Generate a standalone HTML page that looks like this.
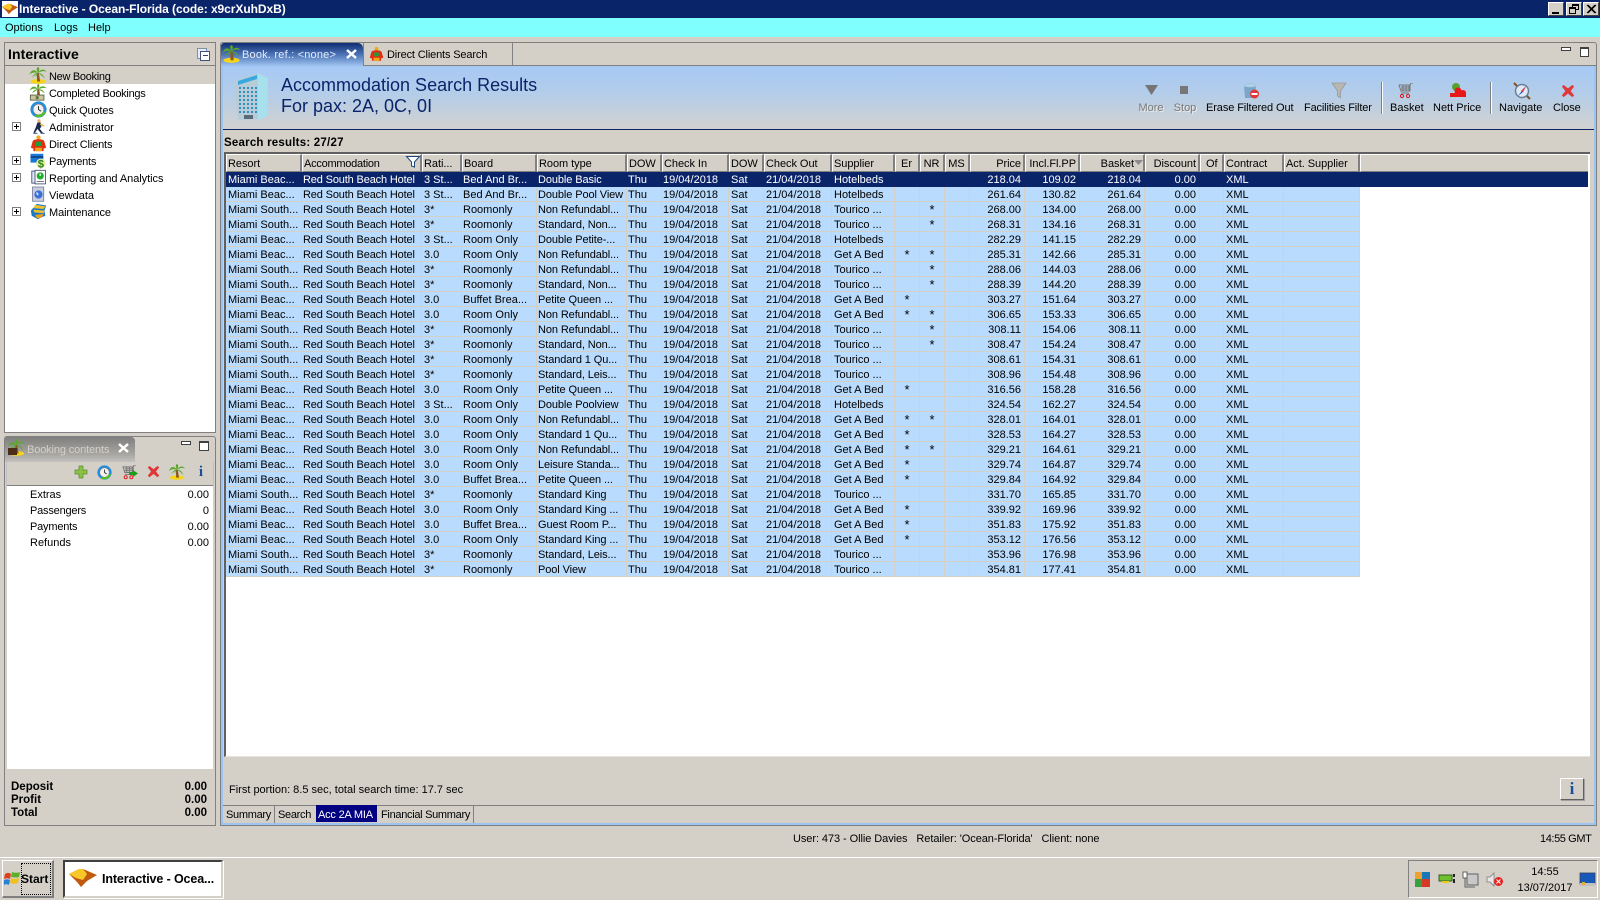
<!DOCTYPE html>
<html><head><meta charset="utf-8"><title>Interactive</title>
<style>
html,body{margin:0;padding:0;width:1600px;height:900px;overflow:hidden;background:#d4d0c8}
body{position:relative;font:11px/14px "Liberation Sans",sans-serif;color:#000}
.a{position:absolute;white-space:nowrap;margin-top:1px}
.b{position:absolute;box-sizing:border-box}
svg.i{position:absolute;overflow:visible}
.r{text-align:right}
table{position:absolute;left:226px;top:154px;width:1362px;border-collapse:separate;border-spacing:0;table-layout:fixed;font:11px/14px "Liberation Sans",sans-serif;background:#fff}
th{height:18px;padding:1px 2px 0 1px;box-sizing:border-box;font-weight:normal;text-align:left;background:#d4d0c8;border-top:1px solid #fff;border-left:1px solid #fff;border-right:2px solid #808080;border-bottom:1px solid #808080;overflow:hidden;white-space:nowrap;letter-spacing:-.05px}
th:nth-child(2){letter-spacing:-.25px}
th:nth-child(18){padding-left:5px}
td{height:15px;padding:1px 2px 0;box-sizing:border-box;background:#b9dbfd;border-right:1px solid #d4d0c8;box-shadow:inset 0 -1px #d4d0c8;overflow:hidden;white-space:nowrap}
td:nth-child(2){padding-left:1px;letter-spacing:-.15px}
td:nth-child(n+4):nth-child(-n+7){padding-left:1px}
td:nth-child(5){letter-spacing:-.1px}
td:nth-child(n+14):nth-child(-n+17){text-align:right;padding-right:3px}
th:nth-child(n+14):nth-child(-n+17){text-align:right;padding-right:2px}
th:nth-child(n+16):nth-child(-n+16){padding-right:9px}
td:nth-child(n+11):nth-child(-n+13),th:nth-child(n+11):nth-child(-n+13){text-align:center}
td:nth-child(11),td:nth-child(12){font-size:13px}
td:last-child{background:#fff;border:0;box-shadow:none}
th:last-child{border-right:0}
tr.s td{background:#0a246a;color:#fff;border-right-color:#0a246a;box-shadow:none}
</style></head><body>
<svg width="0" height="0" style="position:absolute"><defs>
<symbol id="palm" viewBox="0 0 20 20"><ellipse cx="10" cy="17" rx="9" ry="2.800" fill="#f6d418"/><path d="M8.500 7h2.500l1.500 10H9z" fill="#8a5a20"/><path d="M10 7C6 2 2 3 0 9c3-3 6-3 10-2zM10 7C8 3 8 1 10 0c2 1 2 4 0 7zM10 7c3-5 8-5 10-1-3-2-6-1-10 1zM10 7c-4 0-6 3-7 6 2-3 4-4 7-6zM10 7c4 0 7 3 8 7-2-3-5-5-8-7zM10 7c-2 1-3 3-3 5 1-2 2-3 3-5z" fill="#5aa828"/></symbol>
<symbol id="money" viewBox="0 0 20 20"><path d="M9 6h2.500l1 8H9z" fill="#8a5a20"/><path d="M10 6C6 1 2 3 0 8c3-3 6-3 10-2zM10 6C8 2 9 0 11 0c1 2 1 3-1 6zM10 6c3-4 8-4 10-1-3-1-6 0-10 1zM10 6c-3 0-6 2-7 5 2-2 5-3 7-5zM10 6c4 0 7 2 8 5-2-2-5-3-8-5z" fill="#5aa828"/><rect x="1" y="13" width="16" height="6" fill="#c8c8a0" stroke="#5a5a40"/><circle cx="9" cy="16" r="2" fill="#6a7a40"/></symbol>
<symbol id="clock" viewBox="0 0 20 20"><circle cx="10" cy="10" r="9.500" fill="#1c90e8"/><circle cx="10" cy="10" r="6.500" fill="#f2f2f2" stroke="#777"/><path d="M10 6v4l3 2" stroke="#333" stroke-width="1.200" fill="none"/><path d="M5 18c5 3 12 0 14-6l-4 1c-1 3-5 4-8 3z" fill="#5ac020"/></symbol>
<symbol id="run" viewBox="0 0 20 20"><circle cx="10" cy="3" r="2" fill="#e8b070"/><path d="M8 5h4l1 5-2 3 4 5h-3l-4-5-3 5H3l3-7z" fill="#1a2a50"/><path d="M12 6l5 3-1 1-5-2z" fill="#e8b040"/><path d="M3 18h5v1H3zM12 18h5v1h-5z" fill="#204080"/></symbol>
<symbol id="client" viewBox="0 0 20 20"><circle cx="10" cy="3" r="2.500" fill="#f0a818"/><path d="M3 8c0-2 3-3 7-3s7 1 7 3l2 7-3 1v3H4v-3l-3-1z" fill="#e03010"/><rect x="7" y="8" width="6" height="5" fill="#18a040"/><rect x="6" y="15" width="8" height="4" fill="#f0a818"/></symbol>
<symbol id="pay" viewBox="0 0 20 20"><rect x="0" y="1" width="16" height="11" fill="#1878d8"/><rect x="0" y="4" width="16" height="2" fill="#103c78"/><circle cx="13" cy="13" r="6" fill="#e8f0a0"/><text x="13" y="18" font-size="14" font-weight="bold" text-anchor="middle" fill="#288020" font-family="Liberation Sans">$</text></symbol>
<symbol id="rep" viewBox="0 0 20 20"><rect x="1" y="2" width="11" height="15" fill="#dfe6f2" stroke="#30406a"/><rect x="5" y="1" width="13" height="17" fill="#fff" stroke="#30406a"/><circle cx="11.500" cy="8" r="4.500" fill="#20b030"/><path d="M11.500 5v3" stroke="#fff" stroke-width="1.500"/><path d="M7 15h9" stroke="#556"/></symbol>
<symbol id="view" viewBox="0 0 20 20"><rect x="2" y="0" width="15" height="19" fill="#c8cede" stroke="#6a7296"/><circle cx="10" cy="10" r="5.500" fill="#3a70d8"/><path d="M7 7c2 0 3 1 3 3s-3 2-3-3z" fill="#d0e0ff"/></symbol>
<symbol id="maint" viewBox="0 0 20 20"><path d="M8 1l11 2-2 6 1 6-9 4-7-4-1-6z" fill="#1878c8"/><path d="M6 2l12 2-2 3-12-1zM4 8l13 1-1 3-11-1z" fill="#f0c030"/><path d="M6 14l10-1-2 4-6 1z" fill="#f0a018"/></symbol>
<symbol id="x" viewBox="0 0 16 16"><path d="M3 1l5 4 5-4 2 2-4 5 4 5-2 2-5-4-5 4-2-2 4-5-4-5z" fill="#e03838"/></symbol>
<symbol id="tree" viewBox="0 0 9 9"><rect x=".5" y=".5" width="8" height="8" fill="#fff" stroke="#808080"/><path d="M2 4.500h5M4.500 2v5" stroke="#000"/></symbol>
<symbol id="gem" viewBox="0 0 28 18"><path d="M0 5l10-5h4l14 6-10 6-6 6-4-5z" fill="#c05a10"/><path d="M0 5l10-5 4 0 4 5-4 6-7-2z" fill="#f8c828"/></symbol>
<symbol id="cart" viewBox="0 0 16 16"><path d="M1 2h11v6H3zM3 4h9M3 6h9M5 2v6M8 2v6M11 2v6M12 2l1-2h2" stroke="#777" fill="none"/><circle cx="4" cy="13" r="1.600" fill="none" stroke="#e01818"/><circle cx="10" cy="13" r="1.600" fill="none" stroke="#e01818"/><path d="M3 10h8" stroke="#777"/></symbol>
</defs></svg>

<!-- title bar -->
<div class="b" style="left:0;top:0;width:1600px;height:18px;background:#0a246a"></div>
<div class="b" style="left:2px;top:1px;width:16px;height:16px;background:#fff"></div>
<svg class="i" style="left:2px;top:3px" width="16" height="12"><use href="#gem"/></svg>
<div class="a" style="left:19px;top:1px;color:#fff;font:bold 12px/14px 'Liberation Sans',sans-serif;letter-spacing:-.06px">Interactive - Ocean-Florida (code: x9crXuhDxB)</div>
<div class="b" style="left:1548px;top:2px;width:16px;height:14px;background:#d4d0c8;border:1px solid;border-color:#fff #404040 #404040 #fff"><div class="b" style="left:3px;top:9px;width:7px;height:2px;background:#000"></div></div>
<div class="b" style="left:1566px;top:2px;width:16px;height:14px;background:#d4d0c8;border:1px solid;border-color:#fff #404040 #404040 #fff"><div class="b" style="left:5px;top:1px;width:7px;height:6px;border:1px solid #000;border-top-width:2px"></div><div class="b" style="left:2px;top:4px;width:7px;height:7px;border:1px solid #000;border-top-width:2px;background:#d4d0c8"></div></div>
<div class="b" style="left:1583px;top:2px;width:16px;height:14px;background:#d4d0c8;border:1px solid;border-color:#fff #404040 #404040 #fff"><svg class="i" style="left:3px;top:2px" width="9" height="8"><path d="M0 0l8 8M1 0l8 8M8 0l-8 8M9 0l-8 8" stroke="#000"/></svg></div>

<!-- menu -->
<div class="b" style="left:0;top:18px;width:1600px;height:19px;background:#80ffff"></div>
<div class="a" style="left:5px;top:20px">Options</div>
<div class="a" style="left:54px;top:20px">Logs</div>
<div class="a" style="left:88px;top:20px">Help</div>

<!-- left tree panel -->
<div class="b" style="left:4px;top:42px;width:212px;height:391px;background:#fff;border:1px solid #808080"></div>
<div class="b" style="left:5px;top:43px;width:210px;height:23px;background:#d4d0c8;border-bottom:1px solid #808080"></div>
<div class="a" style="left:8px;top:45px;font:bold 14px/16px 'Liberation Sans',sans-serif;letter-spacing:.08px">Interactive</div>
<div class="b" style="left:197px;top:48px;width:10px;height:11px;border:1px solid #8090a8;background:#e8eef8"></div>
<div class="b" style="left:200px;top:51px;width:10px;height:10px;border:1px solid #405080;background:#fff"><div class="b" style="left:2px;top:3px;width:5px;height:1px;background:#304070"></div></div>
<div class="b" style="left:5px;top:66px;width:210px;height:18px;background:#d4d0c8"></div>
<svg class="i" style="left:29px;top:67px" width="18" height="17"><use href="#palm"/></svg>
<svg class="i" style="left:29px;top:84px" width="18" height="17"><use href="#money"/></svg>
<svg class="i" style="left:30px;top:101px" width="17" height="17"><use href="#clock"/></svg>
<svg class="i" style="left:31px;top:118px" width="16" height="17"><use href="#run"/></svg>
<svg class="i" style="left:30px;top:135px" width="17" height="17"><use href="#client"/></svg>
<svg class="i" style="left:30px;top:153px" width="17" height="16"><use href="#pay"/></svg>
<svg class="i" style="left:31px;top:169px" width="16" height="17"><use href="#rep"/></svg>
<svg class="i" style="left:31px;top:186px" width="15" height="17"><use href="#view"/></svg>
<svg class="i" style="left:30px;top:203px" width="17" height="17"><use href="#maint"/></svg>
<svg class="i" style="left:12px;top:122px" width="9" height="9"><use href="#tree"/></svg>
<svg class="i" style="left:12px;top:156px" width="9" height="9"><use href="#tree"/></svg>
<svg class="i" style="left:12px;top:173px" width="9" height="9"><use href="#tree"/></svg>
<svg class="i" style="left:12px;top:207px" width="9" height="9"><use href="#tree"/></svg>
<div class="a" style="left:49px;top:69px;letter-spacing:-.3px">New Booking</div>
<div class="a" style="left:49px;top:86px;letter-spacing:-.28px">Completed Bookings</div>
<div class="a" style="left:49px;top:103px;letter-spacing:-.17px">Quick Quotes</div>
<div class="a" style="left:49px;top:120px">Administrator</div>
<div class="a" style="left:49px;top:137px;letter-spacing:-.15px">Direct Clients</div>
<div class="a" style="left:49px;top:154px;letter-spacing:-.22px">Payments</div>
<div class="a" style="left:49px;top:171px;letter-spacing:-.05px">Reporting and Analytics</div>
<div class="a" style="left:49px;top:188px">Viewdata</div>
<div class="a" style="left:49px;top:205px;letter-spacing:-.1px">Maintenance</div>

<!-- booking contents panel -->
<div class="b" style="left:4px;top:436px;width:212px;height:390px;background:#d4d0c8;border:1px solid #808080;border-radius:3px 3px 0 0"></div>
<div class="b" style="left:5px;top:437px;width:130px;height:25px;background:linear-gradient(#7f7f7f,#a8a6a2 70%,#c4c2be);border-radius:2px 4px 0 0"></div>
<svg class="i" style="left:8px;top:439px" width="17" height="17"><use href="#palm"/></svg>
<div class="b" style="left:8px;top:448px;width:9px;height:7px;background:#4a2c18"></div>
<div class="a" style="left:27px;top:442px;color:#d4d0c8;letter-spacing:-.13px">Booking contents</div>
<svg class="i" style="left:118px;top:443px" width="11" height="10"><path d="M1 1l9 8M10 1l-9 8" stroke="#fff" stroke-width="2.500"/></svg>
<div class="b" style="left:181px;top:441px;width:10px;height:4px;background:#fff;border:1px solid #404040"></div>
<div class="b" style="left:199px;top:441px;width:10px;height:10px;background:#fff;border:1px solid #404040;border-top-width:2px"></div>
<div class="b" style="left:7px;top:462px;width:206px;height:24px;background:#d4d0c8;border-bottom:1px solid #808080;box-shadow:-1px 0 #c0bfc8,1px 0 #c0bfc8"></div>
<div class="b" style="left:7px;top:486px;width:206px;height:283px;background:#fff"></div>
<svg class="i" style="left:75px;top:466px" width="12" height="12"><path d="M4 0h4v4h4v4H8v4H4V8H0V4h4z" fill="#8cc048" stroke="#5a8a30" stroke-width=".7"/></svg>
<svg class="i" style="left:97px;top:465px" width="15" height="15"><use href="#clock"/></svg>
<svg class="i" style="left:121px;top:465px" width="17" height="15"><use href="#cart"/></svg>
<svg class="i" style="left:129px;top:470px" width="9" height="7"><path d="M0 2h4V0l5 3.500L4 7V5H0z" fill="#18a018"/></svg>
<svg class="i" style="left:147px;top:465px" width="13" height="13"><use href="#x"/></svg>
<svg class="i" style="left:169px;top:464px" width="16" height="16"><use href="#palm"/></svg>
<div class="a" style="left:197px;top:463px;width:8px;text-align:center;color:#1b4f9c;font:bold 15px/16px 'Liberation Serif',serif">i</div>
<div class="a" style="left:30px;top:487px">Extras</div><div class="a r" style="right:1391px;top:487px">0.00</div>
<div class="a" style="left:30px;top:503px;letter-spacing:-.2px">Passengers</div><div class="a r" style="right:1391px;top:503px">0</div>
<div class="a" style="left:30px;top:519px;letter-spacing:-.2px">Payments</div><div class="a r" style="right:1391px;top:519px">0.00</div>
<div class="a" style="left:30px;top:535px">Refunds</div><div class="a r" style="right:1391px;top:535px">0.00</div>
<div class="a" style="left:11px;top:779px;font-weight:bold;font-size:11.500px;line-height:14px">Deposit</div><div class="a" style="right:1393px;top:779px;font-weight:bold;font-size:11.500px">0.00</div>
<div class="a" style="left:11px;top:792px;font-weight:bold;font-size:11.500px;line-height:14px">Profit</div><div class="a" style="right:1393px;top:792px;font-weight:bold;font-size:11.500px">0.00</div>
<div class="a" style="left:11px;top:805px;font-weight:bold;font-size:11.500px;line-height:14px">Total</div><div class="a" style="right:1393px;top:805px;font-weight:bold;font-size:11.500px">0.00</div>

<!-- right panel -->
<div class="b" style="left:220px;top:42px;width:1377px;height:784px;background:#d4d0c8;border:1px solid #808080;border-radius:3px 3px 0 0"></div>
<div class="b" style="left:220px;top:65px;width:1377px;height:761px;border:1px solid #808080;border-top:0"></div>
<div class="b" style="left:221px;top:65px;width:1375px;height:1px;background:#808080"></div>
<div class="b" style="left:221px;top:66px;width:2px;height:758px;background:#9cc4f2"></div>
<div class="b" style="left:1594px;top:66px;width:2px;height:758px;background:#9cc4f2"></div>
<div class="b" style="left:221px;top:823px;width:1375px;height:2px;background:#9cc4f2"></div>
<div class="b" style="left:223px;top:66px;width:1371px;height:63px;background:linear-gradient(#a6c9f5,#b4cde9 45%,#d2d2d0)"></div>
<div class="b" style="left:223px;top:129px;width:1371px;height:1px;background:#0a246a"></div>
<!-- tabs -->
<div class="b" style="left:221px;top:43px;width:142px;height:24px;background:linear-gradient(#0f2d74,#4f77b8 50%,#a6c9f5);border-radius:3px 5px 0 0"></div>
<svg class="i" style="left:222px;top:45px" width="19" height="18"><use href="#palm"/></svg>
<div class="a" style="left:242px;top:47px;color:#e4ecf8;letter-spacing:.2px">Book. ref.: &lt;none&gt;</div>
<svg class="i" style="left:346px;top:49px" width="11" height="10"><path d="M1 1l9 8M10 1l-9 8" stroke="#fff" stroke-width="2.500"/></svg>
<div class="b" style="left:363px;top:43px;width:150px;height:23px;background:#d4d0c8;border-right:1px solid #808080;border-bottom:1px solid #808080;border-left:1px solid #808080"></div>
<svg class="i" style="left:369px;top:46px" width="15" height="16"><use href="#client"/></svg>
<div class="a" style="left:387px;top:47px;letter-spacing:-.15px">Direct Clients Search</div>
<div class="b" style="left:1561px;top:47px;width:10px;height:4px;background:#fff;border:1px solid #404040"></div>
<div class="b" style="left:1580px;top:47px;width:9px;height:10px;background:#fff;border:1px solid #404040;border-top-width:2px"></div>

<!-- header -->
<svg class="i" style="left:234px;top:73px" width="36" height="48" viewBox="0 0 36 48"><path d="M0 8L24 0v46L4 47z" fill="#b8ccd8"/><path d="M24 0l10 5-1 38-9 4z" fill="#a8e0ee"/><path d="M4 8l19-6v4L4 12z" fill="#38a8e0"/><g stroke="#2f8fc0" stroke-width="2" stroke-dasharray="2 2"><path d="M5 15h18M5 19h18M5 23h18M5 27h18M5 31h18M5 35h18M5 39h18"/></g><rect x="10" y="42" width="9" height="4" fill="#5a6a78"/></svg>
<div class="a" style="left:281px;top:74px;color:#0a246a;font-size:18px;line-height:21px">Accommodation Search Results</div>
<div class="a" style="left:281px;top:95px;color:#0a246a;font-size:18px;line-height:21px">For pax: 2A, 0C, 0I</div>

<!-- toolbar -->
<svg class="i" style="left:1145px;top:85px" width="13" height="11"><path d="M0 0h13L6.500 10z" fill="#757575"/></svg>
<div class="a" style="left:1137px;top:100px;width:28px;text-align:center;color:#777;text-shadow:1px 1px #eee">More</div>
<div class="b" style="left:1180px;top:86px;width:8px;height:8px;background:#777"></div>
<div class="a" style="left:1170px;top:100px;width:30px;text-align:center;color:#777;text-shadow:1px 1px #eee">Stop</div>
<svg class="i" style="left:1243px;top:83px" width="17" height="17"><path d="M1 2c3-2 9-2 12 0l-1 13H2z" fill="#7aa6c8"/><ellipse cx="7" cy="2.500" rx="6" ry="1.800" fill="#b0d0e8"/><circle cx="11.500" cy="11" r="4.500" fill="#e03838"/><rect x="8.500" y="10" width="6" height="2" fill="#fff"/></svg>
<div class="a" style="left:1206px;top:100px;letter-spacing:-.1px">Erase Filtered Out</div>
<svg class="i" style="left:1332px;top:83px" width="14" height="16"><path d="M0 0h14L8.500 8v7l-3-2V8z" fill="#b8b8b0" stroke="#888" stroke-width=".6"/></svg>
<div class="a" style="left:1304px;top:100px;letter-spacing:-.15px">Facilities Filter</div>
<div class="b" style="left:1381px;top:82px;width:2px;height:32px;background:linear-gradient(90deg,#808080 50%,#fff 50%)"></div>
<svg class="i" style="left:1398px;top:83px" width="16" height="16"><use href="#cart"/></svg>
<div class="a" style="left:1390px;top:100px">Basket</div>
<svg class="i" style="left:1450px;top:83px" width="17" height="16"><circle cx="6" cy="4" r="4" fill="#58a030"/><path d="M0 10h16v4H0z" fill="#e81818"/><circle cx="8" cy="8" r="3.500" fill="#e81818"/><circle cx="13" cy="10" r="3" fill="#e81818"/></svg>
<div class="a" style="left:1433px;top:100px">Nett Price</div>
<div class="b" style="left:1490px;top:82px;width:2px;height:32px;background:linear-gradient(90deg,#808080 50%,#fff 50%)"></div>
<svg class="i" style="left:1514px;top:83px" width="16" height="16"><circle cx="8" cy="8" r="6.500" fill="#dfeaf6" stroke="#6a8096" stroke-width="1.500"/><path d="M12 3L7 9l-3 4 5-4z" fill="#2050c0"/><path d="M12 3L9 9l-2-1z" fill="#e03030"/><path d="M0 0l3 3M13 13l3 3" stroke="#805020" stroke-width="2"/></svg>
<div class="a" style="left:1499px;top:100px">Navigate</div>
<svg class="i" style="left:1561px;top:84px" width="14" height="14"><use href="#x"/></svg>
<div class="a" style="left:1553px;top:100px;letter-spacing:-.1px">Close</div>

<div class="a" style="left:224px;top:135px;font-weight:bold;font-size:11.500px;letter-spacing:.22px">Search results: 27/27</div>

<!-- table frame -->
<div class="b" style="left:224px;top:152px;width:1366px;height:605px;background:#fff;border:1px solid;border-width:2px 0 1px 2px;border-color:#606060 #fff #e8e4dc #606060"></div>
<table>
<colgroup><col style="width:76px"><col style="width:120px"><col style="width:40px"><col style="width:75px"><col style="width:90px"><col style="width:35px"><col style="width:67px"><col style="width:35px"><col style="width:68px"><col style="width:63px"><col style="width:25px"><col style="width:25px"><col style="width:25px"><col style="width:55px"><col style="width:55px"><col style="width:65px"><col style="width:55px"><col style="width:24px"><col style="width:60px"><col style="width:76px"><col></colgroup>
<tr><th>Resort<th>Accommodation<th>Rati...<th>Board<th>Room type<th>DOW<th>Check In<th>DOW<th>Check Out<th>Supplier<th>Er<th>NR<th>MS<th>Price<th>Incl.Fl.PP<th>Basket<th>Discount<th>Of<th>Contract<th>Act. Supplier<th></tr>
<tr class="s"><td>Miami Beac...<td>Red South Beach Hotel<td>3 St...<td>Bed And Br...<td>Double Basic<td>Thu<td>19/04/2018<td>Sat<td>21/04/2018<td>Hotelbeds<td><td><td><td>218.04<td>109.02<td>218.04<td>0.00<td><td>XML<td><td></tr>
<tr><td>Miami Beac...<td>Red South Beach Hotel<td>3 St...<td>Bed And Br...<td>Double Pool View<td>Thu<td>19/04/2018<td>Sat<td>21/04/2018<td>Hotelbeds<td><td><td><td>261.64<td>130.82<td>261.64<td>0.00<td><td>XML<td><td></tr>
<tr><td>Miami South...<td>Red South Beach Hotel<td>3*<td>Roomonly<td>Non Refundabl...<td>Thu<td>19/04/2018<td>Sat<td>21/04/2018<td>Tourico ...<td><td>*<td><td>268.00<td>134.00<td>268.00<td>0.00<td><td>XML<td><td></tr>
<tr><td>Miami South...<td>Red South Beach Hotel<td>3*<td>Roomonly<td>Standard, Non...<td>Thu<td>19/04/2018<td>Sat<td>21/04/2018<td>Tourico ...<td><td>*<td><td>268.31<td>134.16<td>268.31<td>0.00<td><td>XML<td><td></tr>
<tr><td>Miami Beac...<td>Red South Beach Hotel<td>3 St...<td>Room Only<td>Double Petite-...<td>Thu<td>19/04/2018<td>Sat<td>21/04/2018<td>Hotelbeds<td><td><td><td>282.29<td>141.15<td>282.29<td>0.00<td><td>XML<td><td></tr>
<tr><td>Miami Beac...<td>Red South Beach Hotel<td>3.0<td>Room Only<td>Non Refundabl...<td>Thu<td>19/04/2018<td>Sat<td>21/04/2018<td>Get A Bed<td>*<td>*<td><td>285.31<td>142.66<td>285.31<td>0.00<td><td>XML<td><td></tr>
<tr><td>Miami South...<td>Red South Beach Hotel<td>3*<td>Roomonly<td>Non Refundabl...<td>Thu<td>19/04/2018<td>Sat<td>21/04/2018<td>Tourico ...<td><td>*<td><td>288.06<td>144.03<td>288.06<td>0.00<td><td>XML<td><td></tr>
<tr><td>Miami South...<td>Red South Beach Hotel<td>3*<td>Roomonly<td>Standard, Non...<td>Thu<td>19/04/2018<td>Sat<td>21/04/2018<td>Tourico ...<td><td>*<td><td>288.39<td>144.20<td>288.39<td>0.00<td><td>XML<td><td></tr>
<tr><td>Miami Beac...<td>Red South Beach Hotel<td>3.0<td>Buffet Brea...<td>Petite Queen ...<td>Thu<td>19/04/2018<td>Sat<td>21/04/2018<td>Get A Bed<td>*<td><td><td>303.27<td>151.64<td>303.27<td>0.00<td><td>XML<td><td></tr>
<tr><td>Miami Beac...<td>Red South Beach Hotel<td>3.0<td>Room Only<td>Non Refundabl...<td>Thu<td>19/04/2018<td>Sat<td>21/04/2018<td>Get A Bed<td>*<td>*<td><td>306.65<td>153.33<td>306.65<td>0.00<td><td>XML<td><td></tr>
<tr><td>Miami South...<td>Red South Beach Hotel<td>3*<td>Roomonly<td>Non Refundabl...<td>Thu<td>19/04/2018<td>Sat<td>21/04/2018<td>Tourico ...<td><td>*<td><td>308.11<td>154.06<td>308.11<td>0.00<td><td>XML<td><td></tr>
<tr><td>Miami South...<td>Red South Beach Hotel<td>3*<td>Roomonly<td>Standard, Non...<td>Thu<td>19/04/2018<td>Sat<td>21/04/2018<td>Tourico ...<td><td>*<td><td>308.47<td>154.24<td>308.47<td>0.00<td><td>XML<td><td></tr>
<tr><td>Miami South...<td>Red South Beach Hotel<td>3*<td>Roomonly<td>Standard 1 Qu...<td>Thu<td>19/04/2018<td>Sat<td>21/04/2018<td>Tourico ...<td><td><td><td>308.61<td>154.31<td>308.61<td>0.00<td><td>XML<td><td></tr>
<tr><td>Miami South...<td>Red South Beach Hotel<td>3*<td>Roomonly<td>Standard, Leis...<td>Thu<td>19/04/2018<td>Sat<td>21/04/2018<td>Tourico ...<td><td><td><td>308.96<td>154.48<td>308.96<td>0.00<td><td>XML<td><td></tr>
<tr><td>Miami Beac...<td>Red South Beach Hotel<td>3.0<td>Room Only<td>Petite Queen ...<td>Thu<td>19/04/2018<td>Sat<td>21/04/2018<td>Get A Bed<td>*<td><td><td>316.56<td>158.28<td>316.56<td>0.00<td><td>XML<td><td></tr>
<tr><td>Miami Beac...<td>Red South Beach Hotel<td>3 St...<td>Room Only<td>Double Poolview<td>Thu<td>19/04/2018<td>Sat<td>21/04/2018<td>Hotelbeds<td><td><td><td>324.54<td>162.27<td>324.54<td>0.00<td><td>XML<td><td></tr>
<tr><td>Miami Beac...<td>Red South Beach Hotel<td>3.0<td>Room Only<td>Non Refundabl...<td>Thu<td>19/04/2018<td>Sat<td>21/04/2018<td>Get A Bed<td>*<td>*<td><td>328.01<td>164.01<td>328.01<td>0.00<td><td>XML<td><td></tr>
<tr><td>Miami Beac...<td>Red South Beach Hotel<td>3.0<td>Room Only<td>Standard 1 Qu...<td>Thu<td>19/04/2018<td>Sat<td>21/04/2018<td>Get A Bed<td>*<td><td><td>328.53<td>164.27<td>328.53<td>0.00<td><td>XML<td><td></tr>
<tr><td>Miami Beac...<td>Red South Beach Hotel<td>3.0<td>Room Only<td>Non Refundabl...<td>Thu<td>19/04/2018<td>Sat<td>21/04/2018<td>Get A Bed<td>*<td>*<td><td>329.21<td>164.61<td>329.21<td>0.00<td><td>XML<td><td></tr>
<tr><td>Miami Beac...<td>Red South Beach Hotel<td>3.0<td>Room Only<td>Leisure Standa...<td>Thu<td>19/04/2018<td>Sat<td>21/04/2018<td>Get A Bed<td>*<td><td><td>329.74<td>164.87<td>329.74<td>0.00<td><td>XML<td><td></tr>
<tr><td>Miami Beac...<td>Red South Beach Hotel<td>3.0<td>Buffet Brea...<td>Petite Queen ...<td>Thu<td>19/04/2018<td>Sat<td>21/04/2018<td>Get A Bed<td>*<td><td><td>329.84<td>164.92<td>329.84<td>0.00<td><td>XML<td><td></tr>
<tr><td>Miami South...<td>Red South Beach Hotel<td>3*<td>Roomonly<td>Standard King<td>Thu<td>19/04/2018<td>Sat<td>21/04/2018<td>Tourico ...<td><td><td><td>331.70<td>165.85<td>331.70<td>0.00<td><td>XML<td><td></tr>
<tr><td>Miami Beac...<td>Red South Beach Hotel<td>3.0<td>Room Only<td>Standard King ...<td>Thu<td>19/04/2018<td>Sat<td>21/04/2018<td>Get A Bed<td>*<td><td><td>339.92<td>169.96<td>339.92<td>0.00<td><td>XML<td><td></tr>
<tr><td>Miami Beac...<td>Red South Beach Hotel<td>3.0<td>Buffet Brea...<td>Guest Room P...<td>Thu<td>19/04/2018<td>Sat<td>21/04/2018<td>Get A Bed<td>*<td><td><td>351.83<td>175.92<td>351.83<td>0.00<td><td>XML<td><td></tr>
<tr><td>Miami Beac...<td>Red South Beach Hotel<td>3.0<td>Room Only<td>Standard King ...<td>Thu<td>19/04/2018<td>Sat<td>21/04/2018<td>Get A Bed<td>*<td><td><td>353.12<td>176.56<td>353.12<td>0.00<td><td>XML<td><td></tr>
<tr><td>Miami South...<td>Red South Beach Hotel<td>3*<td>Roomonly<td>Standard, Leis...<td>Thu<td>19/04/2018<td>Sat<td>21/04/2018<td>Tourico ...<td><td><td><td>353.96<td>176.98<td>353.96<td>0.00<td><td>XML<td><td></tr>
<tr><td>Miami South...<td>Red South Beach Hotel<td>3*<td>Roomonly<td>Pool View<td>Thu<td>19/04/2018<td>Sat<td>21/04/2018<td>Tourico ...<td><td><td><td>354.81<td>177.41<td>354.81<td>0.00<td><td>XML<td><td></tr>
</table>
<svg class="i" style="left:406px;top:156px" width="14" height="12"><path d="M.5.500h13L8.500 6v5l-3-1V6z" fill="#fff" stroke="#1a4a80"/></svg>
<svg class="i" style="left:1134px;top:160px" width="9" height="5"><path d="M0 0h9L4.500 5z" fill="#8a8a8a"/></svg>

<!-- bottom of right panel -->
<div class="a" style="left:229px;top:782px">First portion: 8.5 sec, total search time: 17.7 sec</div>
<div class="b" style="left:1560px;top:778px;width:24px;height:22px;background:#d4d0c8;border:1px solid;border-color:#fff #606060 #606060 #fff;box-shadow:1px 1px #a0a0a0"></div>
<div class="a" style="left:1560px;top:779px;width:24px;text-align:center;color:#1b4f9c;font:bold 17px/18px 'Liberation Serif',serif">i</div>
<div class="b" style="left:223px;top:805px;width:1371px;height:1px;background:#808080"></div>
<div class="a" style="left:226px;top:807px;letter-spacing:-.3px">Summary</div>
<div class="b" style="left:274px;top:806px;width:1px;height:17px;background:#808080"></div>
<div class="a" style="left:278px;top:807px;letter-spacing:-.3px">Search</div>
<div class="b" style="left:316px;top:805px;width:61px;height:17px;background:#000080"></div>
<div class="a" style="left:318px;top:807px;color:#fff;letter-spacing:-.2px">Acc 2A MIA</div>
<div class="a" style="left:381px;top:807px;letter-spacing:-.3px">Financial Summary</div>
<div class="b" style="left:473px;top:806px;width:1px;height:17px;background:#808080"></div>

<!-- status -->
<div class="a" style="left:793px;top:831px;letter-spacing:-.07px">User: 473 - Ollie Davies&nbsp;&nbsp;&nbsp;Retailer: 'Ocean-Florida'&nbsp;&nbsp;&nbsp;Client: none</div>
<div class="a" style="left:1540px;top:831px;letter-spacing:-.4px">14:55 GMT</div>

<!-- taskbar -->
<div class="b" style="left:0;top:857px;width:1600px;height:1px;background:#fff"></div>
<div class="b" style="left:2px;top:860px;width:52px;height:38px;background:#d4d0c8;border:1px solid;border-color:#fff #808080 #808080 #fff;border-width:1px 2px 2px 1px"></div>
<div class="b" style="left:21px;top:863px;width:30px;height:32px;border:1px dotted #000"></div>
<svg class="i" style="left:4px;top:871px" width="16" height="15"><path d="M1 3c3-2 5-1 6 0L6 8C4 7 2 7 0 8z" fill="#e04018"/><path d="M8 1c3 1 5 1 8 0l-1 5c-3 1-5 0-8 0z" fill="#58b028"/><path d="M0 9c2-1 4-1 6 0l-1 5c-2-1-4-1-5 0z" fill="#2a80d8"/><path d="M7 7c3 1 5 1 8 0l-1 5c-3 1-5 1-8 0z" fill="#f0c020"/></svg>
<div class="a" style="left:21px;top:871px;font:bold 12px/15px 'Liberation Sans',sans-serif">Start</div>
<div class="b" style="left:63px;top:860px;width:160px;height:38px;background:#fff;border:2px solid;border-color:#404040 #d4d0c8 #d4d0c8 #404040;box-shadow:1px 1px #fff"></div>
<svg class="i" style="left:69px;top:869px" width="28" height="18"><use href="#gem"/></svg>
<div class="a" style="left:102px;top:871px;font:bold 12.500px/15px 'Liberation Sans',sans-serif;letter-spacing:-.12px">Interactive - Ocea...</div>
<div class="b" style="left:1408px;top:860px;width:190px;height:38px;border:1px solid;border-color:#808080 #fff #fff #808080"></div>
<svg class="i" style="left:1415px;top:872px" width="15" height="15"><rect width="7" height="7" fill="#f0a030"/><rect x="7" width="8" height="7" fill="#1878b8"/><rect y="7" width="7" height="8" fill="#38a040"/><rect x="7" y="7" width="8" height="8" fill="#d83828"/></svg>
<svg class="i" style="left:1439px;top:874px" width="16" height="10"><rect y="1" width="13" height="6" fill="#70c030" stroke="#306020"/><rect x="3" y="7" width="7" height="2" fill="#e8c828"/><path d="M14 0h2v3h-2zM14 5h2v4h-2z" fill="#222"/></svg>
<svg class="i" style="left:1463px;top:871px" width="16" height="17"><rect x="4" y="3" width="11" height="11" fill="#c8c8c8" stroke="#606060"/><rect x="0" y="1" width="4" height="6" fill="#fff" stroke="#606060"/><path d="M2 7v9h10" stroke="#606060" fill="none"/></svg>
<svg class="i" style="left:1487px;top:872px" width="17" height="15"><path d="M0 5h3l4-4v13l-4-4H0z" fill="#e8e8e8" stroke="#909090"/><circle cx="11.500" cy="9.500" r="4.500" fill="#e82020"/><path d="M9.500 7.500l4 4M13.500 7.500l-4 4" stroke="#fff"/></svg>
<div class="a" style="left:1520px;top:864px;width:50px;text-align:center">14:55</div>
<div class="a" style="left:1512px;top:880px;width:66px;text-align:center">13/07/2017</div>
<svg class="i" style="left:1580px;top:873px" width="15" height="13"><rect width="15" height="11" fill="#1858b8" stroke="#304060" stroke-width=".8"/><rect y="10" width="15" height="3" fill="#c0c0c0"/><rect x="2" y="9" width="3" height="3" fill="#e8b030"/></svg>
</body></html>
